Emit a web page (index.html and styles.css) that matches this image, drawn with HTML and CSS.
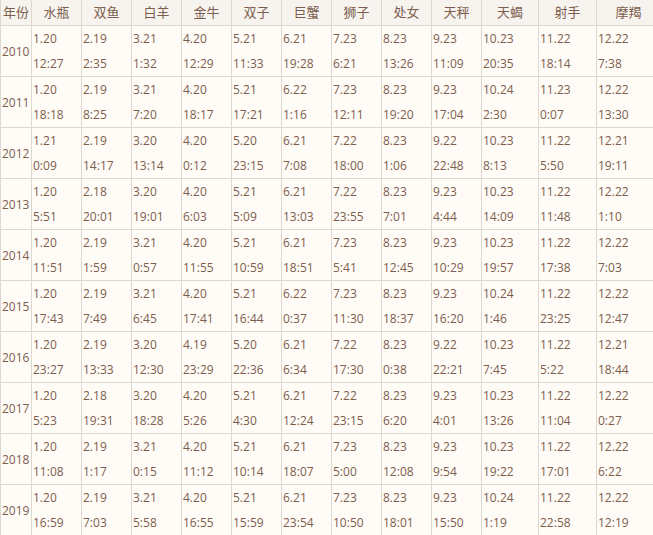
FILE: index.html
```html
<!DOCTYPE html>
<html lang="zh-CN">
<head>
<meta charset="utf-8">
<title>星座时间表</title>
<link rel="stylesheet" href="styles.css">
</head>
<body>
<table class="zodiac">
  <thead>
    <tr>
      <th class="c-year">年份</th>
      <th class="c-std">水瓶</th>
      <th class="c-std">双鱼</th>
      <th class="c-std">白羊</th>
      <th class="c-std">金牛</th>
      <th class="c-std">双子</th>
      <th class="c-std">巨蟹</th>
      <th class="c-std">狮子</th>
      <th class="c-std">处女</th>
      <th class="c-std">天秤</th>
      <th class="c-scorpio">天蝎</th>
      <th class="c-sag">射手</th>
      <th class="c-cap">摩羯</th>
    </tr>
  </thead>
  <tbody>
    <tr><td class="year">2010</td><td>1.20<br>12:27</td><td>2.19<br>2:35</td><td>3.21<br>1:32</td><td>4.20<br>12:29</td><td>5.21<br>11:33</td><td>6.21<br>19:28</td><td>7.23<br>6:21</td><td>8.23<br>13:26</td><td>9.23<br>11:09</td><td>10.23<br>20:35</td><td>11.22<br>18:14</td><td>12.22<br>7:38</td></tr>
    <tr><td class="year">2011</td><td>1.20<br>18:18</td><td>2.19<br>8:25</td><td>3.21<br>7:20</td><td>4.20<br>18:17</td><td>5.21<br>17:21</td><td>6.22<br>1:16</td><td>7.23<br>12:11</td><td>8.23<br>19:20</td><td>9.23<br>17:04</td><td>10.24<br>2:30</td><td>11.23<br>0:07</td><td>12.22<br>13:30</td></tr>
    <tr><td class="year">2012</td><td>1.21<br>0:09</td><td>2.19<br>14:17</td><td>3.20<br>13:14</td><td>4.20<br>0:12</td><td>5.20<br>23:15</td><td>6.21<br>7:08</td><td>7.22<br>18:00</td><td>8.23<br>1:06</td><td>9.22<br>22:48</td><td>10.23<br>8:13</td><td>11.22<br>5:50</td><td>12.21<br>19:11</td></tr>
    <tr><td class="year">2013</td><td>1.20<br>5:51</td><td>2.18<br>20:01</td><td>3.20<br>19:01</td><td>4.20<br>6:03</td><td>5.21<br>5:09</td><td>6.21<br>13:03</td><td>7.22<br>23:55</td><td>8.23<br>7:01</td><td>9.23<br>4:44</td><td>10.23<br>14:09</td><td>11.22<br>11:48</td><td>12.22<br>1:10</td></tr>
    <tr><td class="year">2014</td><td>1.20<br>11:51</td><td>2.19<br>1:59</td><td>3.21<br>0:57</td><td>4.20<br>11:55</td><td>5.21<br>10:59</td><td>6.21<br>18:51</td><td>7.23<br>5:41</td><td>8.23<br>12:45</td><td>9.23<br>10:29</td><td>10.23<br>19:57</td><td>11.22<br>17:38</td><td>12.22<br>7:03</td></tr>
    <tr><td class="year">2015</td><td>1.20<br>17:43</td><td>2.19<br>7:49</td><td>3.21<br>6:45</td><td>4.20<br>17:41</td><td>5.21<br>16:44</td><td>6.22<br>0:37</td><td>7.23<br>11:30</td><td>8.23<br>18:37</td><td>9.23<br>16:20</td><td>10.24<br>1:46</td><td>11.22<br>23:25</td><td>12.22<br>12:47</td></tr>
    <tr><td class="year">2016</td><td>1.20<br>23:27</td><td>2.19<br>13:33</td><td>3.20<br>12:30</td><td>4.19<br>23:29</td><td>5.20<br>22:36</td><td>6.21<br>6:34</td><td>7.22<br>17:30</td><td>8.23<br>0:38</td><td>9.22<br>22:21</td><td>10.23<br>7:45</td><td>11.22<br>5:22</td><td>12.21<br>18:44</td></tr>
    <tr><td class="year">2017</td><td>1.20<br>5:23</td><td>2.18<br>19:31</td><td>3.20<br>18:28</td><td>4.20<br>5:26</td><td>5.21<br>4:30</td><td>6.21<br>12:24</td><td>7.22<br>23:15</td><td>8.23<br>6:20</td><td>9.23<br>4:01</td><td>10.23<br>13:26</td><td>11.22<br>11:04</td><td>12.22<br>0:27</td></tr>
    <tr><td class="year">2018</td><td>1.20<br>11:08</td><td>2.19<br>1:17</td><td>3.21<br>0:15</td><td>4.20<br>11:12</td><td>5.21<br>10:14</td><td>6.21<br>18:07</td><td>7.23<br>5:00</td><td>8.23<br>12:08</td><td>9.23<br>9:54</td><td>10.23<br>19:22</td><td>11.22<br>17:01</td><td>12.22<br>6:22</td></tr>
    <tr><td class="year">2019</td><td>1.20<br>16:59</td><td>2.19<br>7:03</td><td>3.21<br>5:58</td><td>4.20<br>16:55</td><td>5.21<br>15:59</td><td>6.21<br>23:54</td><td>7.23<br>10:50</td><td>8.23<br>18:01</td><td>9.23<br>15:50</td><td>10.24<br>1:19</td><td>11.22<br>22:58</td><td>12.22<br>12:19</td></tr>
  </tbody>
</table>
</body>
</html>
```
FILE: styles.css
```css
html, body {
  margin: 0;
  padding: 0;
  background: #fffcf7;
  overflow: hidden;
}

.zodiac {
  border-collapse: separate;
  border-spacing: 0;
  table-layout: fixed;
  width: 660px;
  border-left: 1px solid #dcd7d0;
  font-family: "Open Sans", "Noto Sans CJK SC", sans-serif;
  color: #7d5d4d;
  font-size: 12px;
  background: #fffcf7;
}

.zodiac th,
.zodiac td {
  box-sizing: border-box;
  padding: 0;
  border-right: 1px solid #dcd7d0;
  border-bottom: 1px solid #dcd7d0;
}

.zodiac th {
  height: 26px;
  line-height: 25px;
  font-size: 13px;
  font-weight: normal;
  text-align: center;
  background: #f7f4f0;
}

.zodiac td {
  height: 51px;
  line-height: 25px;
  text-align: left;
  vertical-align: top;
  padding-left: 1px;
  white-space: nowrap;
}

.zodiac td.year {
  vertical-align: middle;
  padding-left: 1px;
}

.c-year { width: 31px; }
.c-std { width: 50px; }
.c-scorpio { width: 57px; }
.c-sag { width: 58px; }
.c-cap { width: 64px; }
```
